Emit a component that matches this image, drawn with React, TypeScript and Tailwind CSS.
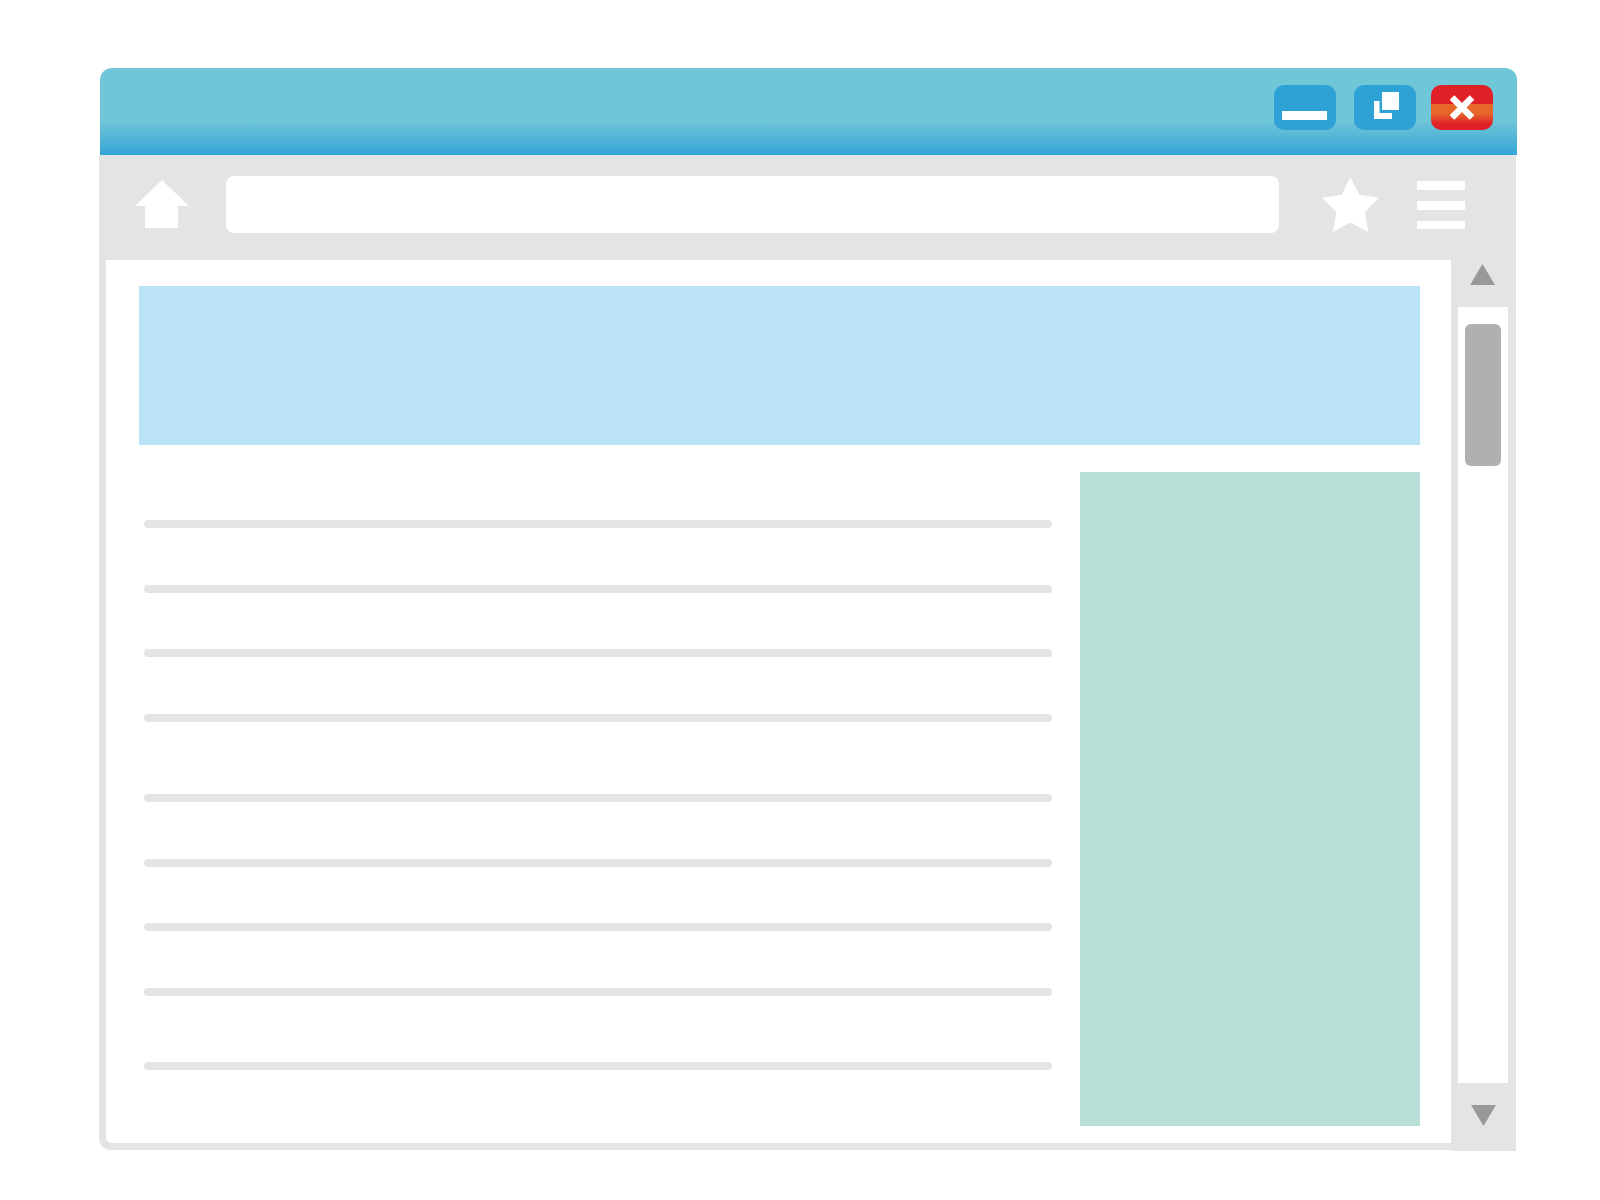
export default function App() {
  return (
    <div className="w-[1600px] h-[1200px] bg-white pl-[99px] pt-[68px]">
      <div className="w-[1418px]">
        <div className="ml-px h-[87px] w-[1417px] rounded-t-[12px] bg-linear-to-b from-[#6fc6d6] from-[60%] to-[#31a5d6] flex justify-end items-start pt-[17px] pr-[24px]">
          <div className="w-[62px] h-[45px] rounded-[10px] bg-[#2ea2d4] pl-[8px] pt-[26px]">
            <div className="w-[45px] h-[9px] bg-white" />
          </div>
          <div className="ml-[18px] w-[62px] h-[45px] rounded-[10px] bg-[#2ea2d4] pl-[20px] pt-[7px]">
            <svg width="25" height="27" viewBox="0 0 25 27" className="block">
              <rect x="8" y="0" width="17" height="18" fill="#fff" />
              <path d="M0 9h5.500v12H18v6H0z" fill="#fff" />
            </svg>
          </div>
          <div className="ml-[15px] w-[62px] h-[45px] rounded-[10px] bg-[linear-gradient(#e02027_43%,#e5692a_43%,#e5652a_64%,#e02027_86%)] pl-[18px] pt-[10px]">
            <svg width="26" height="25" viewBox="0 0 26 25" className="block">
              <path d="M3 2.500 23 22.500M23 2.500 3 22.500" stroke="#fff" strokeWidth="6.500" fill="none" />
            </svg>
          </div>
        </div>
        <div className="w-[1417px] h-[105px] bg-[#e4e4e4] flex items-start">
          <svg width="54" height="48" viewBox="0 0 54 48" className="ml-[36px] mt-[25px] shrink-0">
            <path d="M27 0 54 26H43V48H10V26H0z" fill="#fff" />
          </svg>
          <div className="ml-[37px] mt-[21px] w-[1053px] h-[57px] rounded-[8px] bg-white" />
          <svg width="57" height="55" viewBox="0 0 57 55" className="ml-[43px] mt-[22px] shrink-0">
            <path d="M28.300 0 37.300 17.700 57 20.700 43 34.800 46.300 55 28.300 45.500 11 55 14.300 34.800 0 20.700 19.700 17.700z" fill="#fff" />
          </svg>
          <div className="ml-[38px] mt-[26px] flex flex-col gap-[11px]">
            <div className="w-[48px] h-[9px] bg-white" />
            <div className="w-[48px] h-[9px] bg-white" />
            <div className="w-[48px] h-[8px] bg-white" />
          </div>
        </div>
        <div className="flex items-start">
          <div className="w-[1352px] h-[890px] border-l-[7px] border-b-[7px] border-[#e4e4e4] rounded-bl-[12px] bg-white pl-[33px] pt-[26px]">
            <div className="w-[1281px] h-[159px] bg-[#bbe3f8]" />
            <div className="mt-[27px] flex items-start">
              <div className="w-[941px] pl-[5px] flex flex-col">
                <div className="mt-[48px] w-[908px] h-[8px] rounded-full bg-[#e4e4e4]" />
                <div className="mt-[57px] w-[908px] h-[8px] rounded-full bg-[#e4e4e4]" />
                <div className="mt-[56px] w-[908px] h-[8px] rounded-full bg-[#e4e4e4]" />
                <div className="mt-[57px] w-[908px] h-[8px] rounded-full bg-[#e4e4e4]" />
                <div className="mt-[72px] w-[908px] h-[8px] rounded-full bg-[#e4e4e4]" />
                <div className="mt-[57px] w-[908px] h-[8px] rounded-full bg-[#e4e4e4]" />
                <div className="mt-[56px] w-[908px] h-[8px] rounded-full bg-[#e4e4e4]" />
                <div className="mt-[57px] w-[908px] h-[8px] rounded-full bg-[#e4e4e4]" />
                <div className="mt-[66px] w-[908px] h-[8px] rounded-full bg-[#e4e4e4]" />
              </div>
              <div className="w-[340px] h-[654px] bg-[#b8dfd7]" />
            </div>
          </div>
          <div className="w-[65px] h-[891px] bg-[#e4e4e4] pt-[4px]">
            <svg width="25" height="21" viewBox="0 0 25 21" className="block ml-[19px]">
              <path d="M12.500 0 25 21H0z" fill="#999" />
            </svg>
            <div className="mt-[22px] ml-[7px] w-[50px] h-[776px] bg-white pl-[7px] pt-[17px]">
              <div className="w-[36px] h-[142px] rounded-[6px] bg-[#b0b0b0]" />
            </div>
            <svg width="25" height="21" viewBox="0 0 25 21" className="block ml-[20px] mt-[22px]">
              <path d="M0 0H25L12.500 21z" fill="#999" />
            </svg>
          </div>
        </div>
      </div>
    </div>
  );
}
